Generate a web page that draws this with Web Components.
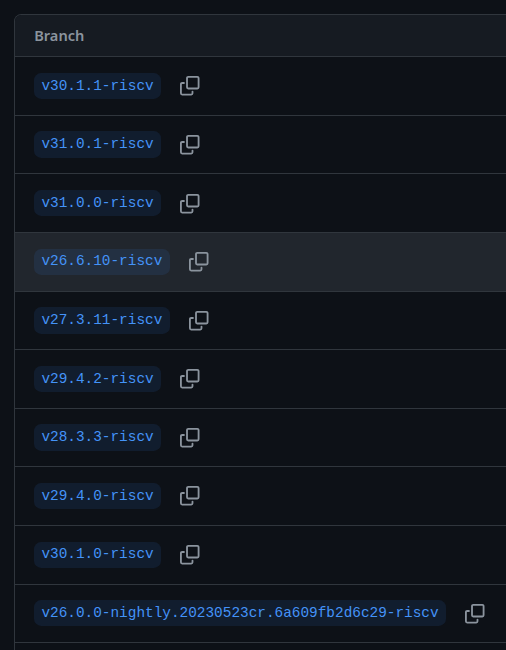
<!DOCTYPE html>
<html lang="en">
<head>
<meta charset="utf-8">
<title>Branches</title>
<style>
html,body{margin:0;background:#0d1117}
body{width:506px;height:650px;overflow:hidden;padding:14px 0 0 14px;box-sizing:border-box}
</style>
</head>
<body>
<branch-table heading="Branch">
<branch-row>v30.1.1-riscv</branch-row>
<branch-row>v31.0.1-riscv</branch-row>
<branch-row>v31.0.0-riscv</branch-row>
<branch-row active>v26.6.10-riscv</branch-row>
<branch-row>v27.3.11-riscv</branch-row>
<branch-row>v29.4.2-riscv</branch-row>
<branch-row>v28.3.3-riscv</branch-row>
<branch-row>v29.4.0-riscv</branch-row>
<branch-row>v30.1.0-riscv</branch-row>
<branch-row>v26.0.0-nightly.20230523cr.6a609fb2d6c29-riscv</branch-row>
<branch-row blank></branch-row>
</branch-table>
<script>
class CopyIcon extends HTMLElement {
  constructor() {
    super();
    this.attachShadow({mode: 'open'}).innerHTML = `
<style>:host{display:block;width:19.5px;height:19.5px;margin-top:.12px;flex:none;color:#8b949e}svg{display:block;width:100%;height:100%;fill:currentColor;overflow:visible}</style>
<svg viewBox="0 0 16 16" aria-hidden="true"><path d="M0 6.75C0 5.784.784 5 1.75 5h1.5a.75.75 0 0 1 0 1.5h-1.5a.25.25 0 0 0-.25.25v7.5c0 .138.112.25.25.25h7.5a.25.25 0 0 0 .25-.25v-1.5a.75.75 0 0 1 1.5 0v1.5A1.75 1.75 0 0 1 9.25 16h-7.5A1.75 1.75 0 0 1 0 14.25Z"/><path d="M5 1.75C5 .784 5.784 0 6.75 0h7.5C15.216 0 16 .784 16 1.75v7.5A1.75 1.75 0 0 1 14.25 11h-7.5A1.75 1.75 0 0 1 5 9.25Zm1.75-.25a.25.25 0 0 0-.25.25v7.5c0 .138.112.25.25.25h7.5a.25.25 0 0 0 .25-.25v-7.5a.25.25 0 0 0-.25-.25Z"/></svg>`;
  }
}
class BranchName extends HTMLElement {
  constructor() {
    super();
    this.attachShadow({mode: 'open'}).innerHTML = `
<style>:host{display:block;box-sizing:border-box;height:26.4px;padding:.8px 7.8px 0 7px;border-radius:7.3px;background:rgba(56,139,253,.1);color:#4493f8;font:14.4px/25.5px "Liberation Mono",monospace;white-space:nowrap}</style>
<slot></slot>`;
  }
}
class BranchRow extends HTMLElement {
  constructor() {
    super();
    const blank = this.hasAttribute('blank');
    this.attachShadow({mode: 'open'}).innerHTML = `
<style>:host{display:flex;align-items:center;gap:19px;box-sizing:border-box;height:58.58px;padding:0 19.4px;border-top:1px solid #30363d}
:host([active]){background:#21262d}
:host([blank]){height:7.8px}</style>
${blank ? '' : '<branch-name><slot></slot></branch-name><copy-icon></copy-icon>'}`;
  }
}
class BranchTable extends HTMLElement {
  constructor() {
    super();
    this.attachShadow({mode: 'open'}).innerHTML = `
<style>:host{display:block;border:1px solid #30363d;border-right:0;border-bottom:0;border-radius:7.3px 0 0 0;overflow:hidden}
header{box-sizing:border-box;height:41.3px;padding:0 19.2px;background:#161b22;color:#8b949e;font:600 14.6px/40.6px "Noto Sans",sans-serif}</style>
<header></header><slot></slot>`;
    this.shadowRoot.querySelector('header').textContent = this.getAttribute('heading');
  }
}
customElements.define('copy-icon', CopyIcon);
customElements.define('branch-name', BranchName);
customElements.define('branch-row', BranchRow);
customElements.define('branch-table', BranchTable);
</script>
</body>
</html>
